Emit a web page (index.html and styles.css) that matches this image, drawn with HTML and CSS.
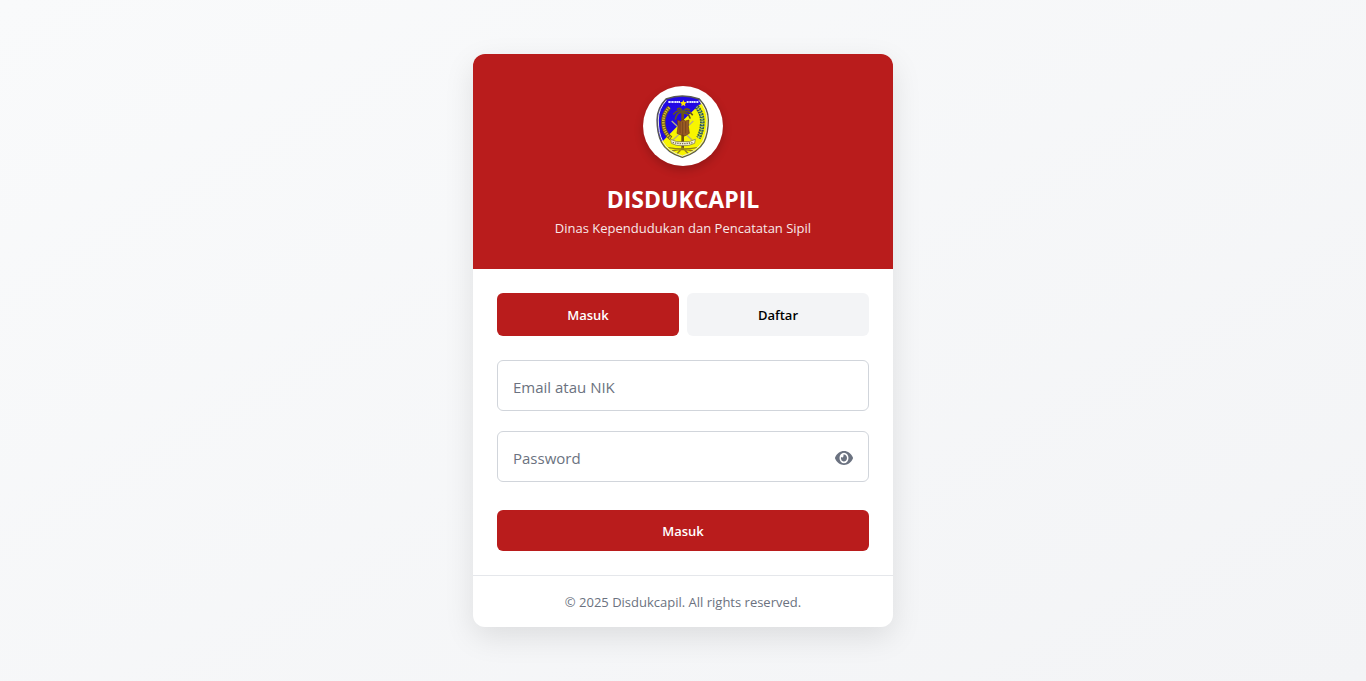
FILE: index.html
```html
<!DOCTYPE html>
<html lang="id">
<head>
<meta charset="utf-8">
<meta name="viewport" content="width=device-width, initial-scale=1">
<title>Disdukcapil</title>
<link rel="stylesheet" href="styles.css">
</head>
<body>
<main class="card">
  <header class="card-header">
    <div class="logo">
      <svg viewBox="15 18 240 240" role="img" aria-label="Logo">
        <defs>
          <clipPath id="shield"><path d="M84 57Q109 48 133 48Q158 48 184 57Q211 86 211 120Q211 160 198 186Q179 219 133 232Q87 219 70 186Q57 160 57 120Q57 84 84 57Z"/></clipPath>
        </defs>
        <g clip-path="url(#shield)">
          <path fill="#f8f500" d="M50 40h170v195H50z"/>
          <path fill="#2109e4" d="M50 40h140v24l-14 18-42 40-60 62H50z"/>
          <path fill="#2109e4" d="M80 55h108v19H80z"/>
          <path fill="none" stroke="#dfe3ff" stroke-width="6" stroke-dasharray="5 1 3 1" d="M91 66h35M146 66h36"/>
          <path fill="#ffe600" d="m136 60 3 6 7 1-5 5 1 7-6-4-6 4 1-7-5-5 7-1z"/>
          <path fill="none" stroke="#6f5c1c" stroke-width="13" d="M94 82Q74 103 76 130Q78 160 99 175"/>
          <path fill="none" stroke="#d9c22c" stroke-width="8" stroke-dasharray="4 3" d="M94 82Q74 103 76 130Q78 160 99 175"/>
          <path fill="none" stroke="#315953" stroke-width="14" stroke-dasharray="6 2" d="M176 80Q193 99 193 126Q192 155 181 174"/>
          <path fill="none" stroke="#a9cba4" stroke-width="5" stroke-dasharray="3 5" d="M176 80Q193 99 193 126Q192 155 181 174"/>
          <path fill="none" stroke="#b6ae80" stroke-width="4" d="m101 123 62 58M166 123l-62 58"/>
          <path fill="none" stroke="#70510d" stroke-width="8" d="M134 98v111"/>
          <path fill="none" stroke="#65571d" stroke-width="5" stroke-linecap="round" d="M134 99q-10-15-27 3M133 98q-16-4-21 19M134 98q-5-18-15-11M135 98q5-16 19-9M135 99q16-12 28 5M136 100q15-2 20 14"/>
          <path fill="#985b23" stroke="#683719" stroke-width="2" d="m118 120 10 4 7-5 7 4 11-3-2 19 3 21-14 8-11-3-12-5 3-20z"/>
          <path fill="none" stroke="#6c391b" stroke-width="2" d="M126 126v33M134 125v41M143 126v34"/>
          <path fill="#f5f2d7" stroke="#726c4b" stroke-width="2" d="M98 178q17 10 37 7 20 3 37-7l-2 12q-18 9-35 7-20 2-35-7z"/>
          <path fill="none" stroke="#776d56" stroke-width="4" stroke-dasharray="4 3" d="M104 187q31 8 62 0"/>
          <path fill="none" stroke="#927f18" stroke-width="4" d="M91 203q42 8 87 0M102 213q31-8 64 0M117 221l17-17 17 17"/>
        </g>
        <path fill="none" stroke="#595953" stroke-width="4" d="M84 57Q109 48 133 48Q158 48 184 57Q211 86 211 120Q211 160 198 186Q179 219 133 232Q87 219 70 186Q57 160 57 120Q57 84 84 57Z"/>
        <path fill="none" stroke="#e8e8db" stroke-width="3" d="M85 61Q61 87 61 120Q61 158 74 184Q91 215 133 228Q175 215 194 184Q207 158 207 120Q207 87 183 61"/>
      </svg>
    </div>
    <h1 class="title">DISDUKCAPIL</h1>
    <p class="subtitle">Dinas Kependudukan dan Pencatatan Sipil</p>
  </header>
  <div class="card-body">
    <div class="tabs">
      <button class="tab tab-active" type="button">Masuk</button>
      <button class="tab" type="button">Daftar</button>
    </div>
    <form class="form">
      <input class="field" type="text" placeholder="Email atau NIK" aria-label="Email atau NIK">
      <div class="password">
        <input class="field" type="password" placeholder="Password" aria-label="Password">
        <button class="toggle" type="button" aria-label="Tampilkan password">
          <svg viewBox="0 64 576 384" preserveAspectRatio="none" aria-hidden="true"><path fill="currentColor" d="M572.52 241.4C518.29 135.59 410.93 64 288 64S57.68 135.64 3.48 241.41a32.35 32.35 0 0 0 0 29.19C57.71 376.41 165.07 448 288 448s230.32-71.64 284.52-177.41a32.35 32.35 0 0 0 0-29.19zM288 400a144 144 0 1 1 144-144 143.93 143.93 0 0 1-144 144zm0-240a95.31 95.31 0 0 0-25.31 3.79 47.85 47.85 0 0 1-66.9 66.9A95.78 95.78 0 1 0 288 160z"/></svg>
        </button>
      </div>
      <button class="submit" type="submit">Masuk</button>
    </form>
  </div>
  <footer class="card-footer">© 2025 Disdukcapil. All rights reserved.</footer>
</main>
</body>
</html>
```

FILE: styles.css
```css
* { box-sizing: border-box; margin: 0; }
body {
  min-height: 100vh;
  display: flex;
  align-items: center;
  justify-content: center;
  padding: 16px;
  background: linear-gradient(150deg, #f9fafb, #f3f4f6);
  font-family: "Open Sans", "Noto Sans", sans-serif;
  color: #6b7280;
}
button, input { font-family: inherit; }
button { border: 0; cursor: pointer; }
.card {
  width: 100%;
  max-width: 420px;
  overflow: hidden;
  border-radius: 12px;
  background: #fff;
  box-shadow: 0 10px 30px rgba(0, 0, 0, .1);
}
.card-header {
  padding: 32px 32px 31px;
  background: #b91c1c;
  color: #fff;
  text-align: center;
}
.logo {
  width: 80px;
  height: 80px;
  margin: 0 auto 17px;
  border-radius: 50%;
  background: #fff;
  box-shadow: 0 4px 10px rgba(0, 0, 0, .2);
}
.logo svg { display: block; width: 100%; height: 100%; }
.title { margin-bottom: 4px; font-size: 23px; line-height: 32px; font-weight: 700; }
.subtitle { font-size: 13px; line-height: 19px; opacity: .9; }
.card-body { padding: 24px; }
.tabs { display: grid; grid-template-columns: 1fr 1fr; gap: 8px; margin-bottom: 24px; }
.tab {
  padding: 13px 12px 11px;
  border-radius: 6px;
  background: #f3f4f6;
  color: #000;
  font-size: 13px;
  line-height: 19px;
  font-weight: 600;
}
.tab-active { background: #b91c1c; color: #fff; }
.form { display: flex; flex-direction: column; gap: 20px; }
.field {
  display: block;
  width: 100%;
  padding: 15px 15px 11px;
  border: 1px solid #d1d5db;
  border-radius: 6px;
  background: #fff;
  color: #111827;
  font-size: 15px;
  line-height: 23px;
}
.field::placeholder { color: #6b7280; opacity: 1; }
.password { position: relative; }
.password .field { padding-right: 48px; }
.toggle {
  position: absolute;
  inset: 2px 16px 0 auto;
  display: flex;
  align-items: center;
  padding: 0;
  background: none;
  color: #6b7280;
}
.toggle svg { width: 18px; height: 14px; }
.submit {
  margin-top: 8px;
  padding: 12px 12px 10px;
  border-radius: 6px;
  background: #b91c1c;
  color: #fff;
  font-size: 13px;
  line-height: 19px;
  font-weight: 600;
}
.card-footer {
  padding: 17px 16px 15px;
  border-top: 1px solid #e5e7eb;
  font-size: 13px;
  line-height: 19px;
  text-align: center;
}
```
